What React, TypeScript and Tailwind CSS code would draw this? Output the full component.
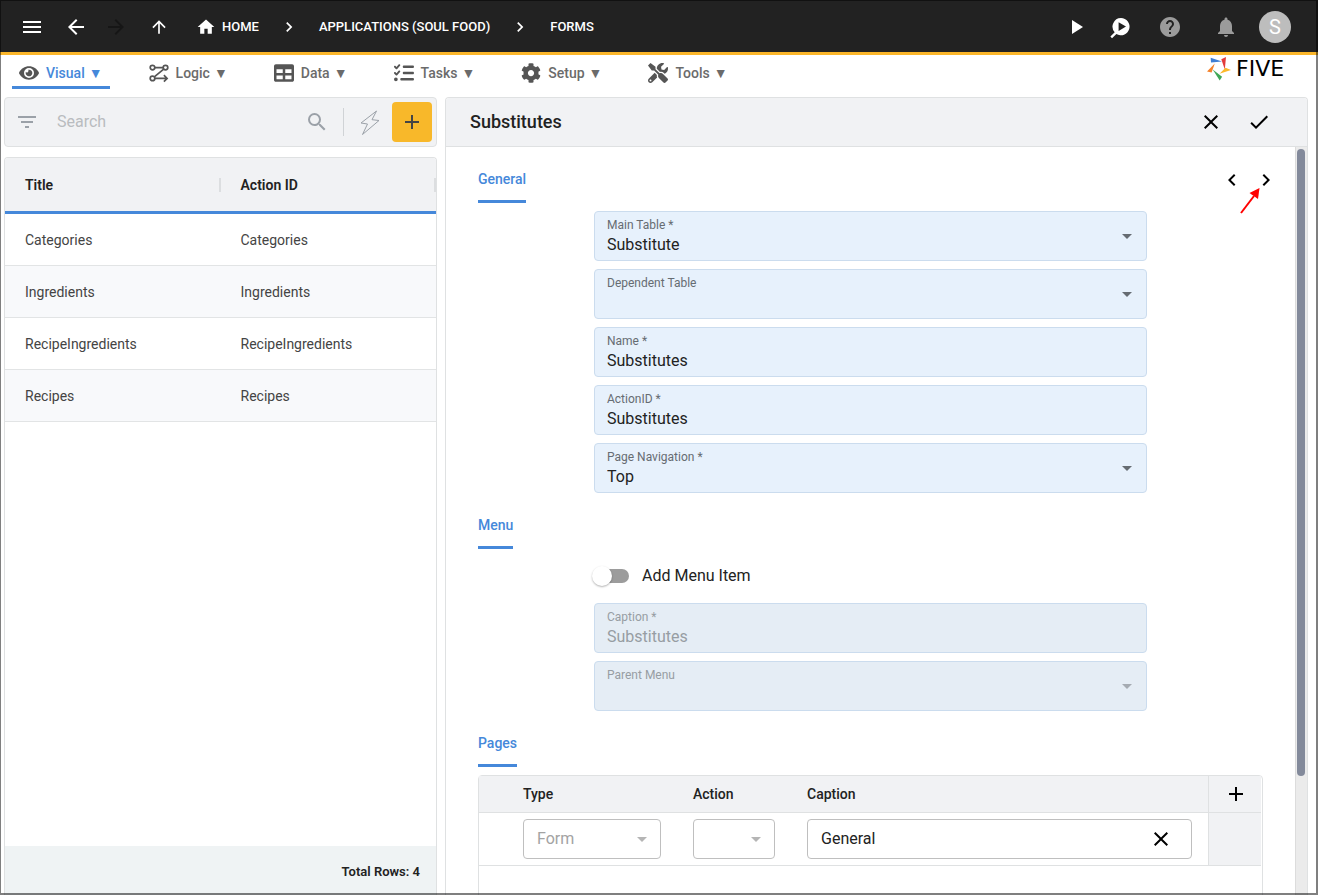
import { type ReactNode } from "react";
import type { IconType } from "react-icons";
import { FaCog, FaEye, FaTable, FaTools } from "react-icons/fa";
import { FaListCheck } from "react-icons/fa6";
import {
  MdAdd,
  MdArrowBack,
  MdArrowDropDown,
  MdArrowForward,
  MdArrowUpward,
  MdCheck,
  MdChevronLeft,
  MdChevronRight,
  MdClose,
  MdFilterList,
  MdHelp,
  MdHome,
  MdMenu,
  MdNotifications,
  MdPlayArrow,
  MdSearch,
} from "react-icons/md";

type NavItem = {
  label: string;
  icon: IconType | typeof LogicIcon;
  active?: boolean;
};

type FieldProps = {
  id: string;
  label: string;
  value?: string;
  disabled?: boolean;
};

const navItems: NavItem[] = [
  { label: "Visual", icon: FaEye, active: true },
  { label: "Logic", icon: LogicIcon },
  { label: "Data", icon: FaTable },
  { label: "Tasks", icon: FaListCheck },
  { label: "Setup", icon: FaCog },
  { label: "Tools", icon: FaTools },
];

const forms = [
  { title: "Categories", actionId: "Categories" },
  { title: "Ingredients", actionId: "Ingredients" },
  { title: "RecipeIngredients", actionId: "RecipeIngredients" },
  { title: "Recipes", actionId: "Recipes" },
];

function LogicIcon({ size = 20 }: { size?: number }) {
  return (
    <svg
      width={size}
      height={size}
      viewBox="0 0 20 20"
      fill="none"
      stroke="currentColor"
      strokeWidth="1.7"
    >
      <circle cx="3.5" cy="4.6" r="2.3" />
      <circle cx="16.5" cy="4.6" r="2.3" />
      <circle cx="3.5" cy="15.4" r="2.3" />
      <path d="M5.800 4.600h8.400M14.700 6.100 5.300 13.900M5.800 15.400h12M14.900 12.200l3.200 3.200-3.200 3.200" />
    </svg>
  );
}

function InspectIcon() {
  return (
    <svg width="24" height="24" viewBox="0 0 24 24" fill="currentColor">
      <path
        fillRule="evenodd"
        d="M13 3a8.600 8.600 0 1 1-4.600 15.900L4 23.200 2.400 21.600l4.300-4.300A8.600 8.600 0 0 1 13 3Zm-2.400 4.200v8.800l7.400-4.400-7.400-4.400Z"
      />
    </svg>
  );
}

function BoltIcon() {
  return (
    <svg
      width="24"
      height="26"
      viewBox="0 0 24 26"
      fill="none"
      stroke="currentColor"
      strokeWidth="1"
      strokeLinejoin="round"
    >
      <path d="M18.500 2 3 14l6.500 1L4.500 25.500 21 11.500l-7-.8 4.500-8.700Z" />
    </svg>
  );
}

function FiveLogo() {
  return (
    <div className="mt-0.5 flex items-center gap-1">
      <svg width="25" height="24" viewBox="0 0 25 24">
        <path fill="#3f7fd4" d="M3.700.7 15 4.500 4 5.500Z" />
        <path fill="#e23b3b" d="M14.300 2.200 19 0l-1.200 12.500Z" />
        <path fill="#fbb82a" d="M24 13l-5.500-2.200-6 5.900Z" />
        <path fill="#3fa756" d="m12.700 23.400 2.400-3.600-9.400-7.300Z" />
        <path fill="#f5822b" d="m0 14.600 4.600.8 3.200-9Z" />
      </svg>
      <span className="w-[58px] font-['DejaVu_Sans',sans-serif] text-[22px] leading-6 text-black">
        FIVE
      </span>
    </div>
  );
}

function TopBar() {
  return (
    <header className="flex h-[55px] shrink-0 items-center justify-between border-b-[3px] border-[#fbb62a] bg-[#222] pr-[27px] pl-5 text-white">
      <div className="flex items-center pt-0.5">
        <button type="button" aria-label="Open menu" className="mr-5">
          <MdMenu size={24} />
        </button>
        <button type="button" aria-label="Back" className="mr-4">
          <MdArrowBack size={24} />
        </button>
        <button
          type="button"
          aria-label="Forward"
          disabled
          className="mr-[21px] text-[#161616]"
        >
          <MdArrowForward size={24} />
        </button>
        <button type="button" aria-label="Up" className="mr-[27px]">
          <MdArrowUpward size={20} />
        </button>

        <nav
          aria-label="Breadcrumb"
          className="flex items-center gap-5 text-[13px] font-medium uppercase"
        >
          <a href="#home" className="flex items-center gap-1.5">
            <MdHome size={20} />
            Home
          </a>
          <MdChevronRight size={20} />
          <a href="#applications">Applications (Soul Food)</a>
          <MdChevronRight size={20} />
          <a href="#forms">Forms</a>
        </nav>
      </div>

      <div className="flex items-center pt-0.5">
        <button type="button" aria-label="Run" className="mr-5">
          <MdPlayArrow size={24} />
        </button>
        <button type="button" aria-label="Inspect" className="mr-[26px]">
          <InspectIcon />
        </button>
        <button type="button" aria-label="Help" className="mr-8 text-[#9b9b9b]">
          <MdHelp size={24} />
        </button>
        <button
          type="button"
          aria-label="Notifications"
          className="mr-[21px] text-[#9b9b9b]"
        >
          <MdNotifications size={24} />
        </button>
        <button
          type="button"
          aria-label="Account"
          className="h-8 w-8 rounded-full bg-[#bdbdbd] text-xl text-white"
        >
          S
        </button>
      </div>
    </header>
  );
}

function MainNav() {
  return (
    <div className="flex h-[42px] shrink-0 items-start justify-between pr-6 pl-3">
      <nav aria-label="Main" className="flex gap-8">
        {navItems.map((item) => {
          const Icon = item.icon;

          return (
            <button
              key={item.label}
              type="button"
              className={`flex h-[34px] items-center rounded-t-sm border-b-[3px] px-[7px] pt-1 text-sm font-medium ${
                item.active
                  ? "border-[#4588da] text-[#4588da]"
                  : "border-transparent text-[#6b6b6b]"
              }`}
            >
              <span className="mr-[7px] text-[#555]">
                <Icon size={20} />
              </span>
              {item.label}
              <span className="ml-1">▼</span>
            </button>
          );
        })}
      </nav>
      <FiveLogo />
    </div>
  );
}

function SearchBar() {
  return (
    <div className="flex h-[50px] shrink-0 items-center rounded border border-[#dfe1e2] bg-[#f1f2f4] pr-1 pl-2.5 text-[#9ba1a8]">
      <button type="button" aria-label="Filter">
        <MdFilterList size={24} />
      </button>
      <input
        type="text"
        aria-label="Search"
        placeholder="Search"
        className="ml-[18px] min-w-0 flex-1 bg-transparent text-base text-[#222] outline-none placeholder:text-[#b9bcbf]"
      />
      <button type="button" aria-label="Search">
        <MdSearch size={24} />
      </button>
      <div className="mr-3.5 ml-3.5 h-7 w-px bg-[#d0d3d6]" />
      <button type="button" aria-label="Quick actions" className="mr-2.5">
        <BoltIcon />
      </button>
      <button
        type="button"
        aria-label="Add form"
        className="flex h-10 w-10 items-center justify-center rounded bg-[#f8b82a] text-[#444]"
      >
        <MdAdd size={24} />
      </button>
    </div>
  );
}

function FormList() {
  return (
    <div className="flex min-h-0 flex-1 flex-col overflow-hidden rounded-t border border-b-0 border-[#dfe1e2]">
      <table className="w-full table-fixed border-separate border-spacing-0 text-left text-sm text-[#444]">
        <thead className="bg-[#f1f2f4] text-[#222]">
          <tr>
            {["Title", "Action ID"].map((heading) => (
              <th
                key={heading}
                className="h-14 border-b-[3px] border-[#4588da] p-0 font-semibold"
              >
                <div className="flex items-center justify-between pl-5">
                  {heading}
                  <span className="h-3.5 w-0.5 bg-[#dcdee0]" />
                </div>
              </th>
            ))}
          </tr>
        </thead>
        <tbody>
          {forms.map((form) => (
            <tr key={form.title} className="even:bg-[#f8f9fb]">
              <td className="h-[52px] border-b border-[#e2e4e5] px-5 py-0">
                {form.title}
              </td>
              <td className="h-[52px] border-b border-[#e2e4e5] px-5 py-0">
                {form.actionId}
              </td>
            </tr>
          ))}
        </tbody>
      </table>
      <div className="mt-auto h-[49px] shrink-0 bg-[#eff3f4] px-4 pt-4 text-right text-[13px] leading-5 font-semibold text-[#222]">
        Total Rows: 4
      </div>
    </div>
  );
}

function fieldBox(disabled?: boolean) {
  return `relative h-[50px] rounded border border-[#cbdcee] px-3 pt-[5px] ${
    disabled ? "bg-[#e5edf5] text-[#979da3]" : "bg-[#e7f1fc] text-[#222]"
  }`;
}

function fieldLabel(disabled?: boolean) {
  return `block text-xs leading-4 ${disabled ? "text-[#979da3]" : "text-[#666c72]"}`;
}

function TextField({ id, label, value, disabled }: FieldProps) {
  return (
    <div className={fieldBox(disabled)}>
      <label htmlFor={id} className={fieldLabel(disabled)}>
        {label}
      </label>
      <input
        id={id}
        type="text"
        defaultValue={value}
        disabled={disabled}
        className="block h-6 w-full bg-transparent text-base leading-6 outline-none"
      />
    </div>
  );
}

function SelectField({ id, label, value = "", disabled }: FieldProps) {
  return (
    <div className={fieldBox(disabled)}>
      <label htmlFor={id} className={fieldLabel(disabled)}>
        {label}
      </label>
      <select
        id={id}
        defaultValue={value}
        disabled={disabled}
        className="block h-6 w-full appearance-none bg-transparent text-base leading-6 opacity-100 outline-none"
      >
        <option value={value}>{value}</option>
      </select>
      <MdArrowDropDown
        size={24}
        className={`pointer-events-none absolute top-3 right-[7px] ${
          disabled ? "text-[#a5abb2]" : "text-[#666c72]"
        }`}
      />
    </div>
  );
}

function CellSelect({ label, value = "" }: { label: string; value?: string }) {
  return (
    <div className="relative">
      <select
        aria-label={label}
        disabled
        defaultValue={value}
        className="block h-10 w-full appearance-none rounded border border-[#bfbfbf] bg-white px-[13px] text-base text-[#a3a3a3] opacity-100"
      >
        <option value={value}>{value}</option>
      </select>
      <MdArrowDropDown
        size={24}
        className="pointer-events-none absolute top-2 right-[7px] text-[#b5b5b5]"
      />
    </div>
  );
}

function Section({ title, children }: { title: string; children: ReactNode }) {
  return (
    <section className="pt-[22px]">
      <h3 className="inline-block h-[34px] rounded-t-xs border-b-[3px] border-[#4588da] align-top text-sm leading-5 font-medium text-[#4588da]">
        {title}
      </h3>
      <div className="mt-2">{children}</div>
    </section>
  );
}

function PagesTable() {
  return (
    <div className="h-[200px] rounded-t border border-[#dfe1e2] pr-px">
      <table className="w-full table-fixed border-separate border-spacing-0 text-left text-sm text-[#222]">
        <colgroup>
          <col className="w-7" />
          <col className="w-[170px]" />
          <col className="w-[114px]" />
          <col />
          <col className="w-[53px]" />
        </colgroup>
        <thead className="bg-[#f1f2f4]">
          <tr className="[&>th]:border-b [&>th]:border-[#dfe1e2]">
            <th className="h-[37px] p-0" />
            <th className="px-4 py-0 font-medium">Type</th>
            <th className="px-4 py-0 font-medium">Action</th>
            <th className="px-4 py-0 font-medium">Caption</th>
            <th className="border-l p-0 pl-0.5">
              <button
                type="button"
                aria-label="Add page"
                className="mx-auto block text-black"
              >
                <MdAdd size={24} />
              </button>
            </th>
          </tr>
        </thead>
        <tbody>
          <tr className="[&>td]:border-b [&>td]:border-[#dfe1e2]">
            <td className="h-[53px] p-0" />
            <td className="px-4 py-0">
              <CellSelect label="Type" value="Form" />
            </td>
            <td className="px-4 py-0">
              <CellSelect label="Action" />
            </td>
            <td className="px-4 py-0">
              <div className="flex h-10 items-center rounded border border-[#bfbfbf] pr-[18px] pl-[13px]">
                <input
                  type="text"
                  aria-label="Caption"
                  defaultValue="General"
                  className="min-w-0 flex-1 text-base outline-none"
                />
                <button
                  type="button"
                  aria-label="Clear caption"
                  className="text-black"
                >
                  <MdClose size={24} />
                </button>
              </div>
            </td>
            <td className="border-l bg-[#f1f2f4] p-0" />
          </tr>
        </tbody>
      </table>
    </div>
  );
}

function FormDetail() {
  return (
    <main className="flex min-h-0 min-w-0 flex-col overflow-hidden rounded-t border border-b-0 border-[#dfe1e2]">
      <div className="flex h-[49px] shrink-0 items-center justify-between border-b border-[#dfe1e2] bg-[#f1f2f4] pr-9 pl-6">
        <h2 className="text-lg font-medium text-[#222]">Substitutes</h2>
        <div className="flex gap-6 text-black">
          <button type="button" aria-label="Cancel">
            <MdClose size={24} />
          </button>
          <button type="button" aria-label="Save">
            <MdCheck size={24} />
          </button>
        </div>
      </div>

      <div className="flex min-h-0 flex-1">
        <div className="relative min-w-0 flex-1 overflow-hidden px-8">
          {/* Page navigation */}
          <div className="absolute top-[21px] right-[17px] flex gap-2.5 text-black">
            <button type="button" aria-label="Previous page">
              <MdChevronLeft size={24} />
            </button>
            <button type="button" aria-label="Next page">
              <MdChevronRight size={24} />
            </button>
          </div>
          <svg
            width="22"
            height="28"
            viewBox="0 0 22 28"
            className="pointer-events-none absolute top-10 right-[34px]"
          >
            <path d="M2 26 15 9" stroke="#f00" strokeWidth="2" />
            <path d="m20.500 1-1.500 11-8.500-6Z" fill="#f00" />
          </svg>

          <Section title="General">
            <div className="mx-[116px] flex flex-col gap-2">
              <SelectField
                id="main-table"
                label="Main Table *"
                value="Substitute"
              />
              <SelectField id="dependent-table" label="Dependent Table" />
              <TextField id="name" label="Name *" value="Substitutes" />
              <TextField
                id="action-id"
                label="ActionID *"
                value="Substitutes"
              />
              <SelectField
                id="page-navigation"
                label="Page Navigation *"
                value="Top"
              />
            </div>
          </Section>

          <Section title="Menu">
            <div className="mx-[116px] flex flex-col gap-2">
              <label className="flex h-[38px] items-center gap-[13px] text-base text-[#222]">
                <span className="relative ml-px flex h-3.5 w-[34px] items-center">
                  <input
                    type="checkbox"
                    role="switch"
                    className="h-3.5 w-[34px] appearance-none rounded-full bg-[#9c9c9c]"
                  />
                  <span className="pointer-events-none absolute -left-[3px] h-5 w-5 rounded-full bg-white shadow-[0_1px_2px_rgba(0,0,0,0.3)]" />
                </span>
                Add Menu Item
              </label>
              <TextField
                id="caption"
                label="Caption *"
                value="Substitutes"
                disabled
              />
              <SelectField id="parent-menu" label="Parent Menu" disabled />
            </div>
          </Section>

          <Section title="Pages">
            <PagesTable />
          </Section>
        </div>

        {/* Scrollbar */}
        <div className="w-3 shrink-0 border-l border-[#dcdcdc] bg-[#ebebeb] px-px pt-0.5">
          <div className="h-[84%] w-2 rounded-full bg-[#838a9b]" />
        </div>
      </div>
    </main>
  );
}

export default function App() {
  return (
    <div className="relative flex h-screen flex-col overflow-hidden bg-white font-[Roboto,sans-serif]">
      <TopBar />
      <MainNav />
      <div className="grid min-h-0 flex-1 grid-cols-[433fr_863fr] gap-2 pr-2.5 pl-1">
        <aside className="flex min-h-0 min-w-0 flex-col gap-2.5">
          <SearchBar />
          <FormList />
        </aside>
        <FormDetail />
      </div>

      {/* Window frame */}
      <div className="pointer-events-none absolute inset-0 border border-r-2 border-b-2 border-black/50" />
    </div>
  );
}
